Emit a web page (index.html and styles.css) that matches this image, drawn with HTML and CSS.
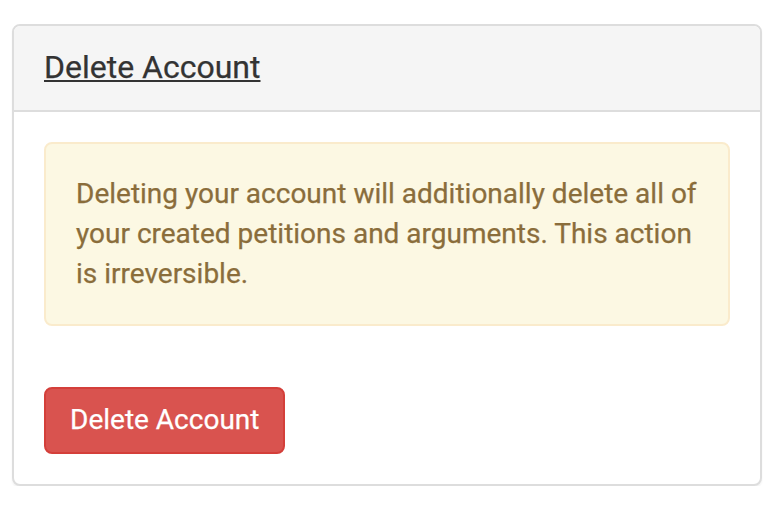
FILE: index.html
```html
<!DOCTYPE html>
<html>
<head>
<meta charset="utf-8">
<link rel="stylesheet" href="styles.css">
</head>
<body>
<div class="panel">
  <div class="panel-heading">
    <h3 class="panel-title"><a href="#">Delete Account</a></h3>
  </div>
  <div class="panel-body">
    <div class="alert">Deleting your account will additionally delete all of your created petitions and arguments. This action is irreversible.</div>
    <form class="actions">
      <button type="button" class="btn-danger">Delete Account</button>
    </form>
  </div>
</div>
</body>
</html>
```

FILE: styles.css
```css
* { box-sizing: border-box; }
html, body { margin: 0; padding: 0; background: #fff; }
body {
  font-family: Roboto, "Liberation Sans", Arial, sans-serif;
  font-size: 28px;
  line-height: 40px;
  color: #333;
  padding: 24px 16px 0 12px;
  -webkit-text-stroke: 0.25px currentColor;
}
.panel {
  width: 750px;
  border: 2px solid #ddd;
  border-radius: 8px;
  background: #fff;
  box-shadow: 0 2px 2px rgba(0,0,0,0.05);
}
.panel-heading {
  background: #f5f5f5;
  border-bottom: 2px solid #ddd;
  border-radius: 6px 6px 0 0;
  padding: 19px 30px 20px;
}
.panel-title {
  margin: 0;
  font-size: 32px;
  font-weight: 400;
  line-height: 45px;
}
.panel-title a {
  color: #333;
  text-decoration: underline;
  text-decoration-thickness: 2px;
  text-underline-offset: 2px;
}
.panel-body {
  padding: 30px;
}
.alert {
  background: #fcf8e3;
  border: 2px solid #faebcc;
  color: #8a6d3b;
  border-radius: 8px;
  padding: 30px;
  margin-bottom: 61px;
}
.actions { margin: 0; }
.btn-danger {
  display: block;
  font-family: Roboto, "Liberation Sans", Arial, sans-serif;
  font-size: 28px;
  line-height: 40px;
  color: #fff;
  background: #d9534f;
  border: 2px solid #d43f3a;
  border-radius: 8px;
  padding: 11px 24px 12px;
  cursor: pointer;
  -webkit-text-stroke: 0.25px #fff;
}
```
